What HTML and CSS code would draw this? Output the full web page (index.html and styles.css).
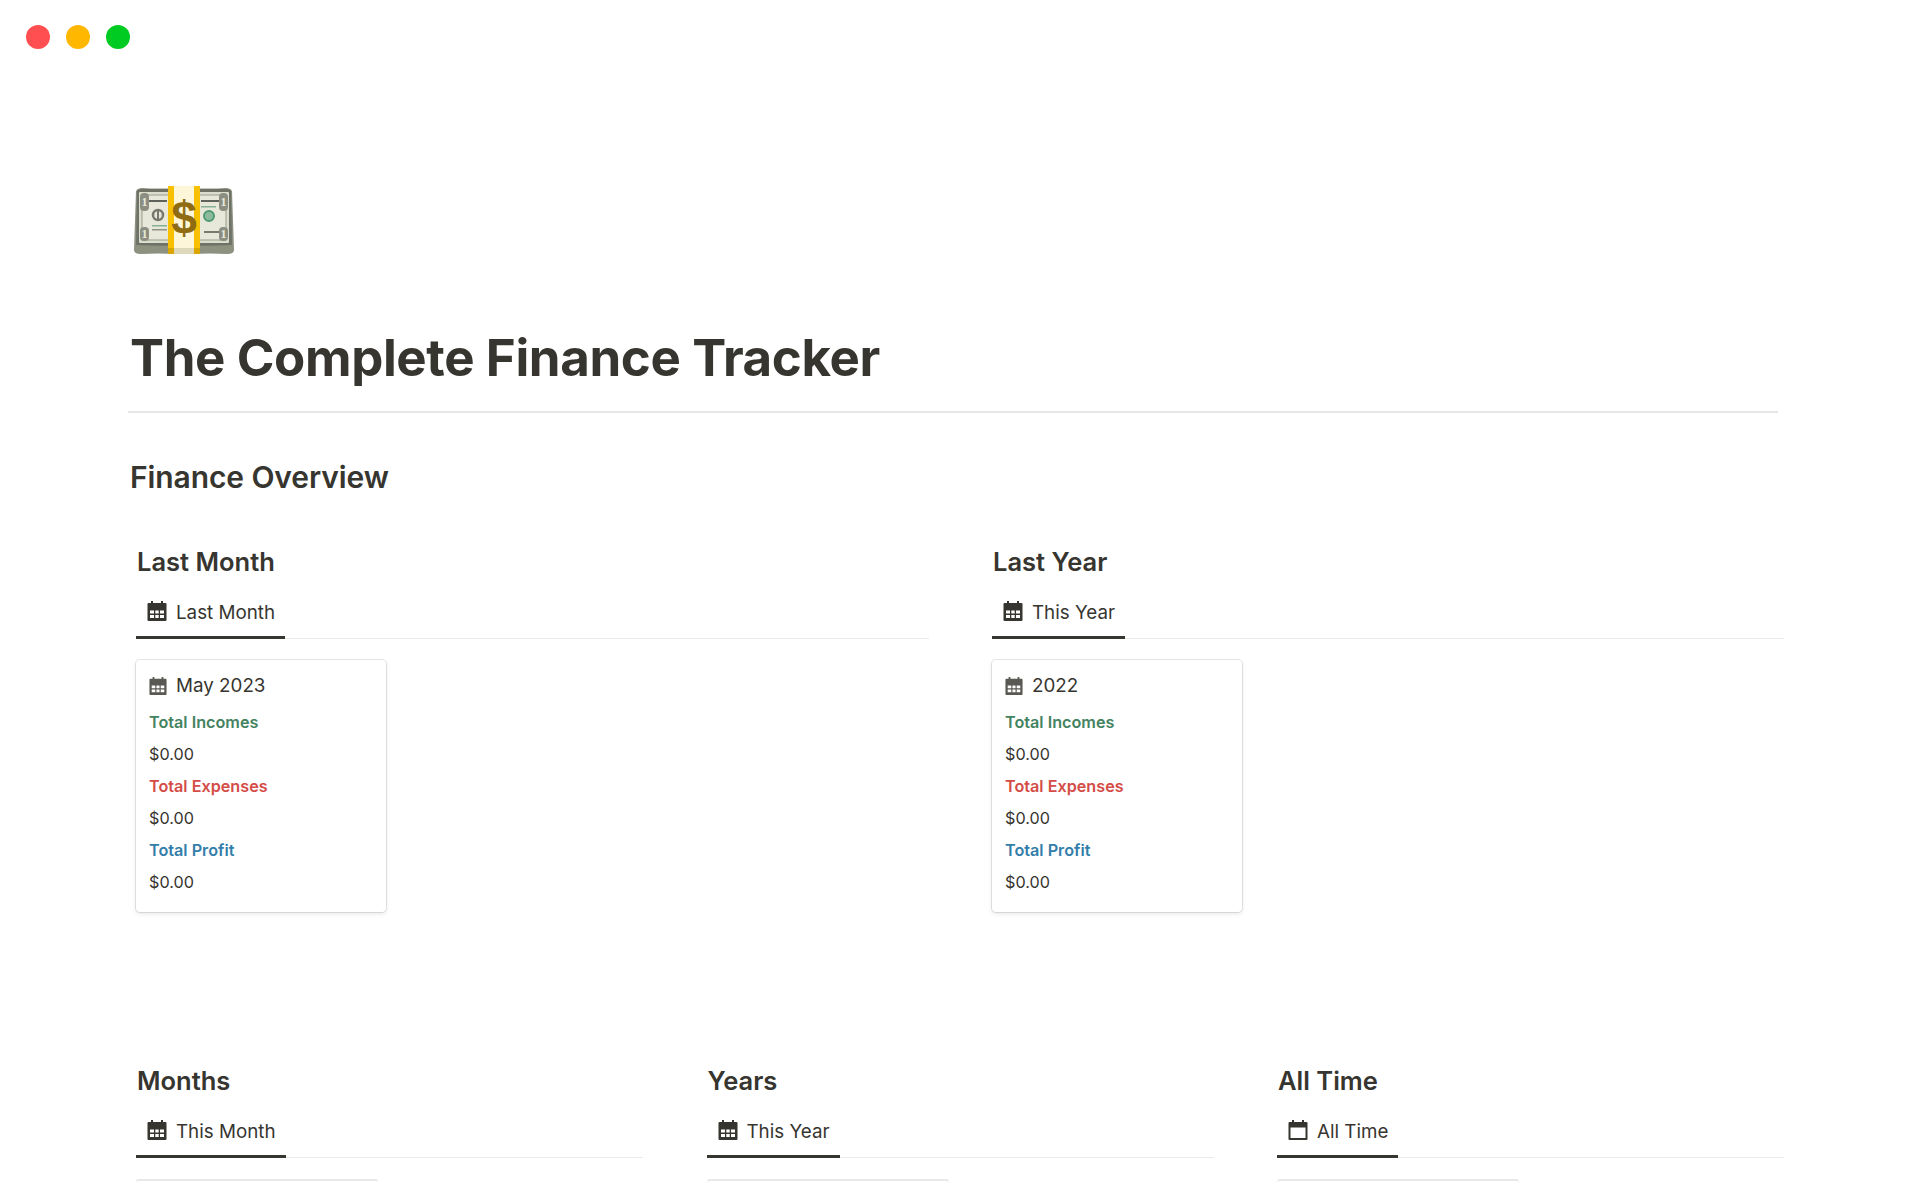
FILE: index.html
```html
<!DOCTYPE html>
<html lang="en">

<head>
	<meta charset="UTF-8">
	<title>The Complete Finance Tracker</title>
	<link rel="stylesheet" href="styles.css">
</head>

<body>
	<svg width="0" height="0" class="defs">
		<symbol id="cal-grid" viewBox="0 0 20 20">
			<path fill="currentColor" fill-rule="evenodd" d="M4 0h2v2h8V0h2v2h2.500a1 1 0 0 1 1 1v16a1 1 0 0 1-1 1H1.500a1 1 0 0 1-1-1V3a1 1 0 0 1 1-1H4zM3 9.500v3h4v-3zm5.300 0v3h3.400v-3zm4.700 0v3h4v-3zM3 14v3h4v-3zm5.300 0v3h3.400v-3zm4.700 0v3h4v-3z" />
		</symbol>
		<symbol id="cal-empty" viewBox="0 0 20 20">
			<path fill="currentColor" fill-rule="evenodd" d="M4 0h2v2h8V0h2v2h2.500a1 1 0 0 1 1 1v16a1 1 0 0 1-1 1H1.500a1 1 0 0 1-1-1V3a1 1 0 0 1 1-1H4zM2.500 7.500v10.500h15V7.500z" />
		</symbol>
	</svg>

	<div class="traffic">
		<span class="dot red"></span>
		<span class="dot amber"></span>
		<span class="dot green"></span>
	</div>

	<main class="page">
		<svg class="emoji" viewBox="0 0 100 68" width="100" height="68" role="img" aria-label="Dollar banknote">
			<path d="M2 5q2-3 6-3q18 1 34 0v66q-18-1-35 0q-7 0-7-4z" fill="#8d9180" />
			<path d="M58 2q16 1 34 0q4 0 6 3l2 59q0 4-7 4q-17-1-35 0z" fill="#8d9180" />
			<path d="M3 4q2-1 5-1h84q3 0 5 1l1 55q-48 2-96 0z" fill="#6f7367" />
			<rect x="5" y="6" width="90" height="51" rx="1" fill="#dcdecd" />
			<rect x="8" y="9" width="84" height="45" fill="#e8e8da" stroke="#9a9c8e" stroke-width="1" />
			<circle cx="24" cy="29" r="5" fill="#e8e8da" stroke="#77796f" stroke-width="2.500" />
			<rect x="23" y="25" width="2" height="8" fill="#77796f" />
			<circle cx="75" cy="30" r="5" fill="#8abb9c" stroke="#4f9a70" stroke-width="2" />
			<rect x="15" y="14" width="18" height="2" fill="#5f6259" />
			<rect x="67" y="14" width="18" height="2" fill="#5f6259" />
			<rect x="18" y="39" width="15" height="1.500" fill="#86b096" />
			<rect x="18" y="43" width="15" height="1.500" fill="#8f9284" />
			<rect x="67" y="20" width="15" height="1.500" fill="#86b096" />
			<rect x="70" y="45" width="16" height="2" fill="#77796f" />
			<rect x="6" y="7" width="9" height="18" rx="4" fill="#8b8e81" />
			<rect x="85" y="7" width="9" height="18" rx="4" fill="#8b8e81" />
			<rect x="6" y="41" width="9" height="14" rx="4" fill="#8b8e81" />
			<rect x="85" y="41" width="9" height="14" rx="4" fill="#8b8e81" />
			<text x="10.500" y="20" class="emoji-one">1</text>
			<text x="89.500" y="20" class="emoji-one">1</text>
			<text x="10.500" y="52" class="emoji-one">1</text>
			<text x="89.500" y="52" class="emoji-one">1</text>
			<rect x="34" y="0" width="32" height="68" fill="#fdf6d8" />
			<rect x="34" y="0" width="6" height="68" fill="#f7c000" />
			<rect x="60" y="0" width="6" height="68" fill="#f7c000" />
			<rect x="34" y="62" width="32" height="6" fill="#000" opacity="0.12" />
			<text x="50" y="48" class="emoji-dollar">$</text>
		</svg>

		<h1 class="title">The Complete Finance Tracker</h1>
		<h2 class="overview">Finance Overview</h2>

		<div class="row-two">
			<section class="block">
				<h3>Last Month</h3>
				<div class="tabs">
					<div class="tab wide">
						<svg class="tab-icon"><use href="#cal-grid" /></svg>
						Last Month
					</div>
				</div>
				<div class="card">
					<div class="card-title">
						<svg class="card-icon"><use href="#cal-grid" /></svg>
						May 2023
					</div>
					<p class="prop income">Total Incomes</p>
					<p class="prop">$0.00</p>
					<p class="prop expense">Total Expenses</p>
					<p class="prop">$0.00</p>
					<p class="prop profit">Total Profit</p>
					<p class="prop">$0.00</p>
				</div>
			</section>

			<section class="block">
				<h3>Last Year</h3>
				<div class="tabs">
					<div class="tab">
						<svg class="tab-icon"><use href="#cal-grid" /></svg>
						This Year
					</div>
				</div>
				<div class="card">
					<div class="card-title">
						<svg class="card-icon"><use href="#cal-grid" /></svg>
						2022
					</div>
					<p class="prop income">Total Incomes</p>
					<p class="prop">$0.00</p>
					<p class="prop expense">Total Expenses</p>
					<p class="prop">$0.00</p>
					<p class="prop profit">Total Profit</p>
					<p class="prop">$0.00</p>
				</div>
			</section>
		</div>

		<div class="row-three">
			<section class="block">
				<h3>Months</h3>
				<div class="tabs">
					<div class="tab wide">
						<svg class="tab-icon"><use href="#cal-grid" /></svg>
						This Month
					</div>
				</div>
				<div class="card-cut"></div>
			</section>

			<section class="block">
				<h3>Years</h3>
				<div class="tabs">
					<div class="tab">
						<svg class="tab-icon"><use href="#cal-grid" /></svg>
						This Year
					</div>
				</div>
				<div class="card-cut"></div>
			</section>

			<section class="block">
				<h3>All Time</h3>
				<div class="tabs">
					<div class="tab">
						<svg class="tab-icon"><use href="#cal-empty" /></svg>
						All Time
					</div>
				</div>
				<div class="card-cut"></div>
			</section>
		</div>
	</main>
</body>

</html>
```

FILE: styles.css
```css
/* Base reset */
* {
	margin: 0;
	padding: 0;
	box-sizing: border-box;
	font-family: Inter, 'Liberation Sans', sans-serif;
}

html,
body {
	height: 1200px;
	overflow: hidden;
	background: #fff;
	color: #37352f;
}

.defs {
	display: block;
	height: 0;
}

/* Window buttons */
.traffic {
	display: flex;
	gap: 16px;
	padding: 25px 0 0 26px;
}

.dot {
	width: 24px;
	height: 24px;
	border-radius: 50%;
}

.red {
	background: #ff4f50;
}

.amber {
	background: #ffb700;
}

.green {
	background: #00cb22;
}

.page {
	width: 1656px;
	margin-left: 128px;
	padding-top: 137px;
}

.emoji {
	display: block;
	margin-left: 6px;
}

.emoji-dollar {
	font-family: 'Liberation Sans', sans-serif;
	font-size: 46px;
	font-weight: 700;
	fill: #8f6c12;
	text-anchor: middle;
}

.emoji-one {
	font-family: 'Liberation Serif', serif;
	font-size: 12px;
	font-weight: 700;
	fill: #e8e8da;
	text-anchor: middle;
}

.title {
	margin-top: 72px;
	padding: 0 0 16px 2px;
	width: 1650px;
	height: 87px;
	font-size: 51px;
	line-height: 64px;
	font-weight: 700;
	letter-spacing: -0.38px;
	border-bottom: 2px solid #e6e6e5;
}

.overview {
	margin: 44px 0 0 2px;
	font-size: 30px;
	line-height: 40px;
	font-weight: 600;
	letter-spacing: -0.1px;
}

.row-two {
	display: grid;
	grid-template-columns: 793px 792px;
	column-gap: 63px;
	margin: 49px 0 0 8px;
}

.row-three {
	display: grid;
	grid-template-columns: repeat(3, 507px);
	column-gap: 63.500px;
	margin: 153px 0 0 8px;
}

.block h3 {
	padding-left: 1px;
	font-size: 25.500px;
	line-height: 32px;
	font-weight: 600;
}

.tabs {
	display: flex;
	margin-top: 14px;
	border-bottom: 1px solid #e9e9e7;
}

.tab {
	display: flex;
	align-items: center;
	gap: 9px;
	height: 47px;
	padding: 0 10px 3px 11px;
	margin-bottom: -1px;
	font-size: 18.800px;
	border-bottom: 3px solid #37352f;
}

.tab-icon {
	width: 20px;
	height: 20px;
	margin-top: -3px;
}

.card {
	width: 250px;
	height: 252px;
	margin-top: 21px;
	padding: 12px 13px 0;
	background: #fff;
	border-radius: 4px;
	box-shadow: 0 0 0 1px rgba(15, 15, 15, 0.1), 0 2px 4px rgba(15, 15, 15, 0.1);
}

/* the lower cards fade out right under their top edge */
.card-cut {
	width: 242px;
	height: 3px;
	margin-top: 21px;
	border-top: 2px solid #e8e8e7;
	border-radius: 4px 4px 0 0;
}

.card-title {
	display: flex;
	align-items: center;
	gap: 9px;
	height: 27px;
	margin-bottom: 7px;
	font-size: 18.800px;
}

.card-icon {
	width: 18px;
	height: 18px;
	color: #5a5852;
}

.prop {
	height: 32px;
	font-size: 16.200px;
	line-height: 32px;
}

.income {
	color: #448361;
	font-weight: 600;
}

.expense {
	color: #d44c47;
	font-weight: 600;
}

.profit {
	color: #337ea9;
	font-weight: 600;
}
```
